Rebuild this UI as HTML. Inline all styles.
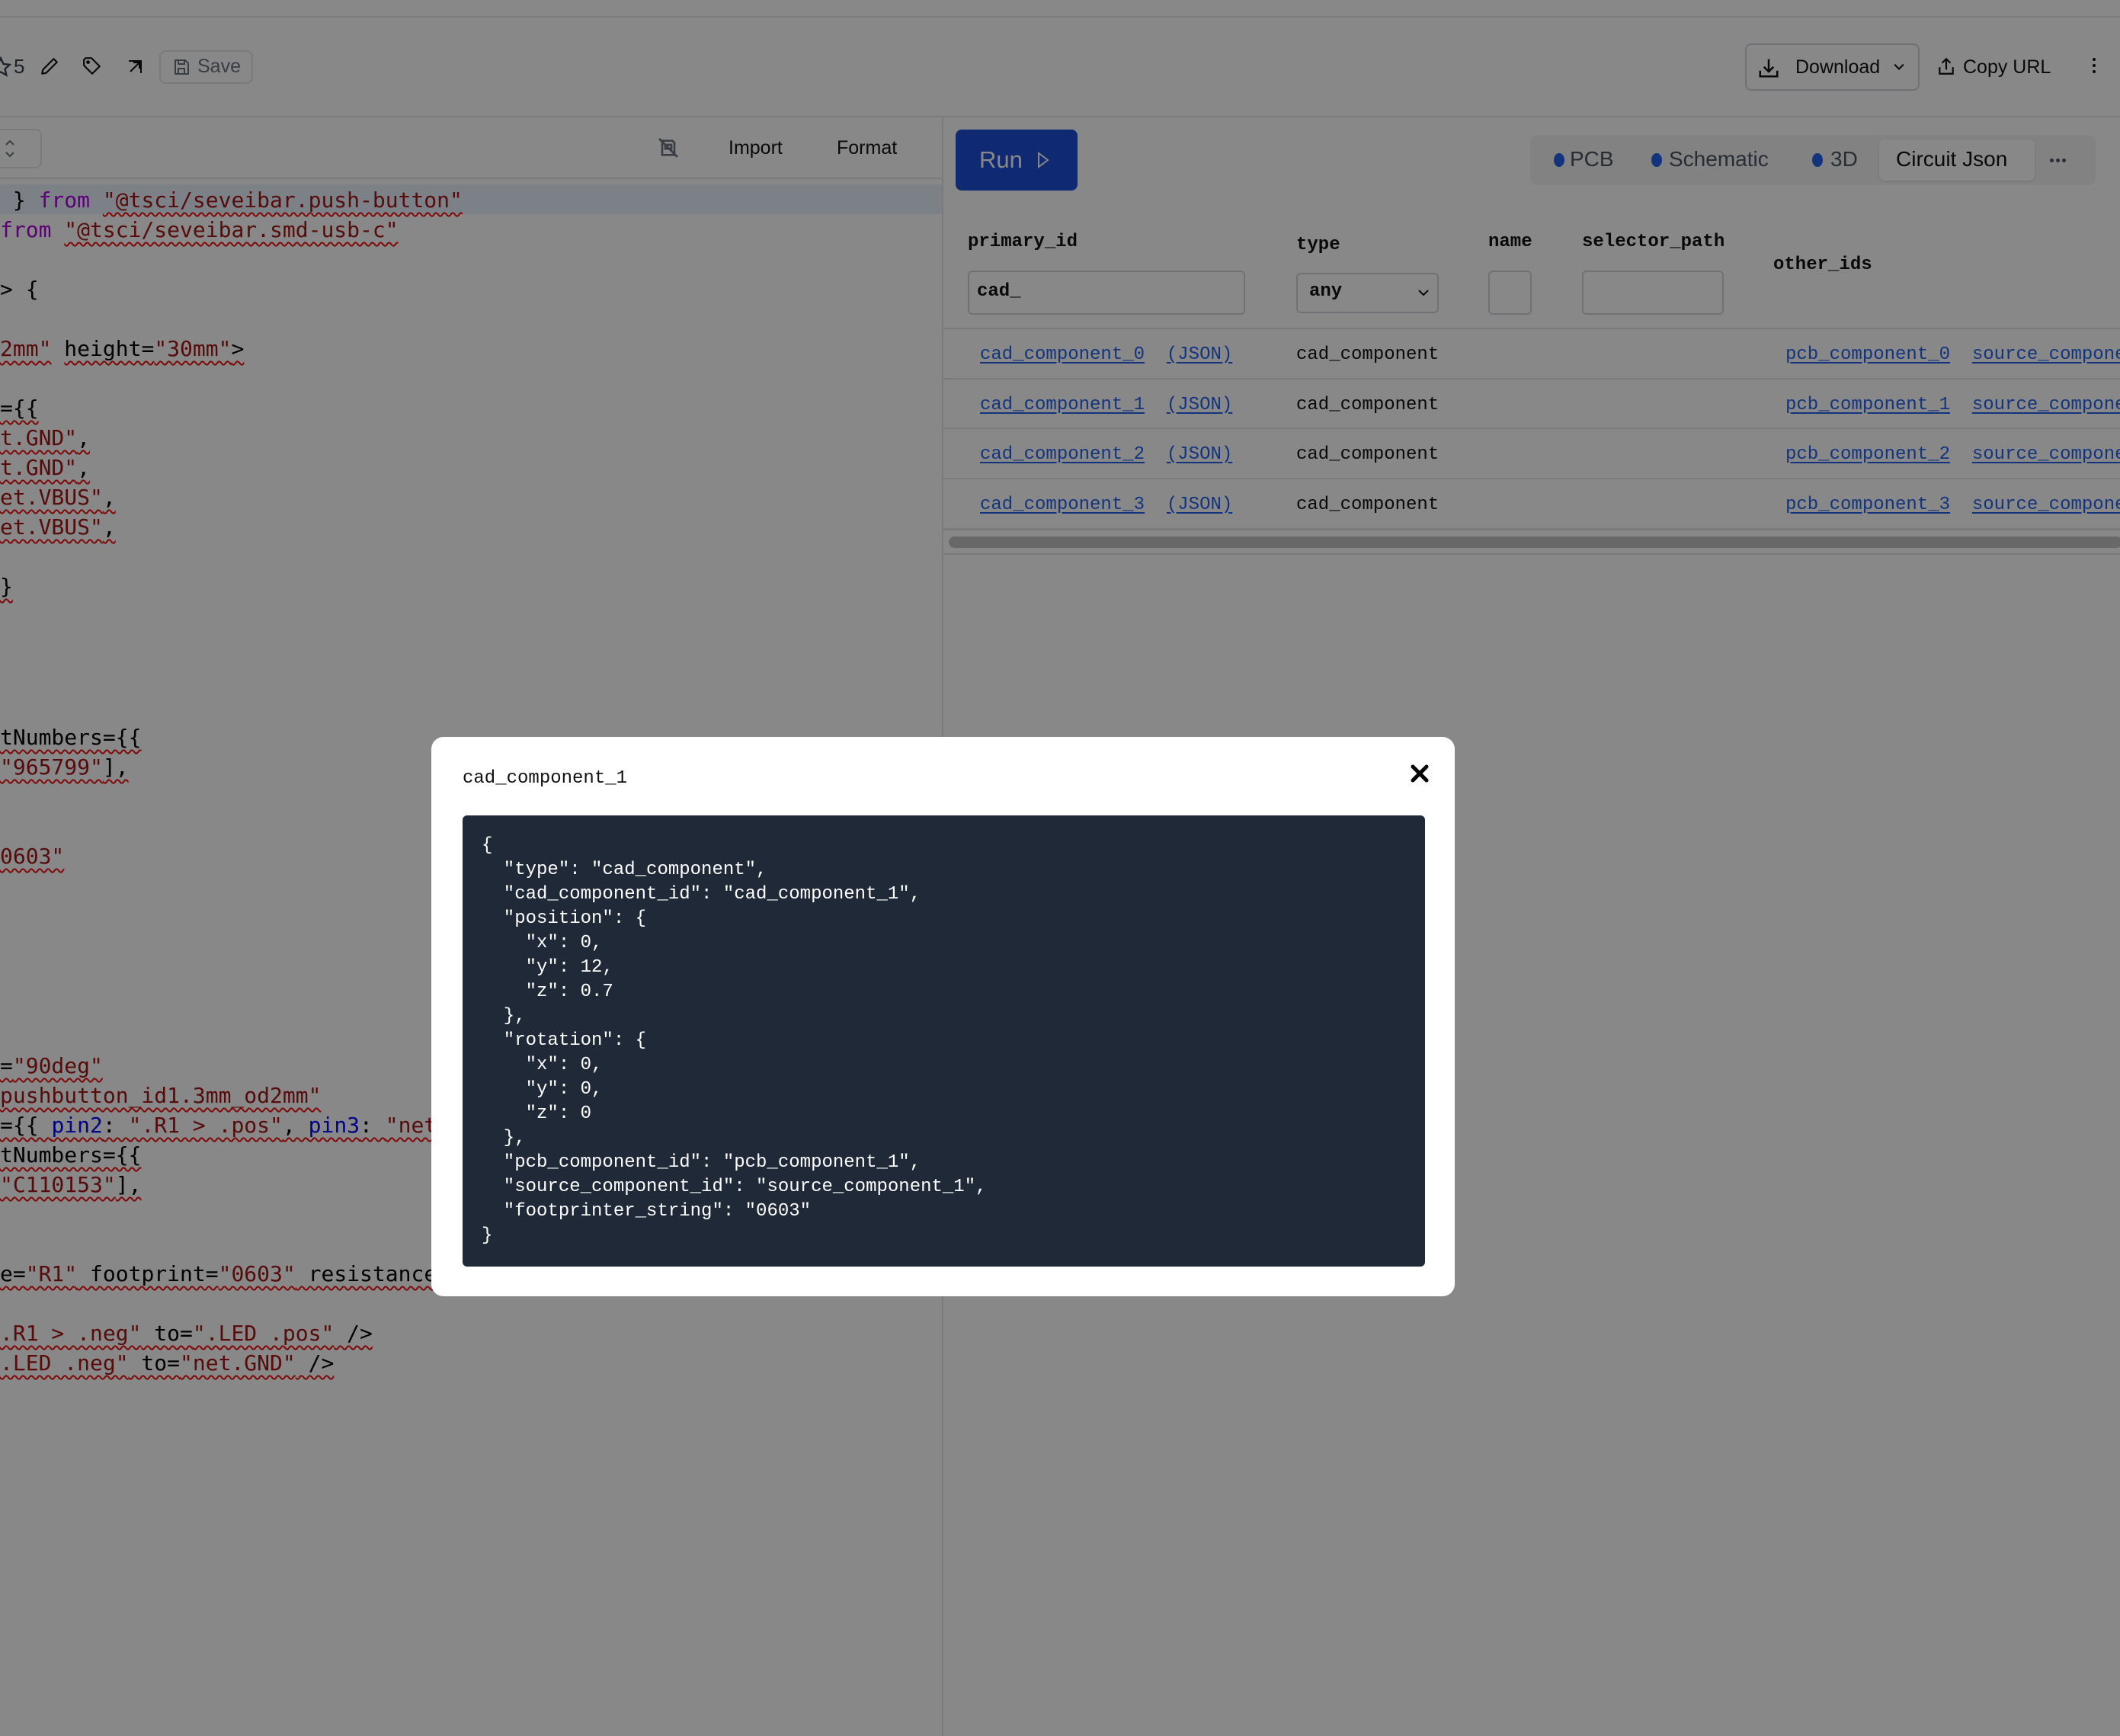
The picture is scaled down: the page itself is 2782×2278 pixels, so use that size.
<!DOCTYPE html>
<html><head><meta charset="utf-8">
<style>
*{box-sizing:border-box;margin:0;padding:0}
html,body{width:2782px;height:2278px;overflow:hidden;background:#fff;font-family:"Liberation Sans",sans-serif;position:relative}
.abs{position:absolute}
.hl{position:absolute;left:0;width:2782px;height:2px;background:#e5e7eb}
.code{position:absolute;left:0;font-family:"DejaVu Sans Mono",monospace;font-size:28px;line-height:39px;white-space:pre;color:#000}
.s{color:#a31515;text-decoration:underline wavy #e11;text-decoration-thickness:2px;text-underline-offset:6px}
.w{text-decoration:underline wavy #e11;text-decoration-thickness:2px;text-underline-offset:6px}
.k{color:#af00db}
.p{color:#0000ff}
.mono{font-family:"Liberation Mono","DejaVu Sans Mono",monospace}
.lnk{color:#2563eb;text-decoration:underline;text-underline-offset:4px}
.tbl{font-size:24px}
.inp{position:absolute;border:2px solid #d1d5db;border-radius:6px;background:#fff}
.row{position:absolute;left:1237px;width:1545px;height:2px;background:#e5e7eb}
.ov{position:absolute;left:0;top:0;width:2782px;height:2278px;background:rgba(0,0,0,0.467)}
</style></head><body>
<div class="hl" style="top:21px"></div>
<!-- header -->
<svg class="abs" style="left:-14px;top:74px" width="30" height="28" viewBox="0 0 24 24" fill="none" stroke="#374151" stroke-width="2"><path d="M12 2l3 6.5 7 .8-5.2 4.8 1.5 7L12 17.5 5.7 21l1.5-7L2 9.3l7-.8z"/></svg>
<div class="abs" style="left:18px;top:72px;font-size:26px;color:#374151">5</div>
<svg class="abs" style="left:52px;top:74px" width="26" height="26" viewBox="0 0 24 24" fill="none" stroke="#111" stroke-width="2" stroke-linejoin="round"><path d="M17 3l4 4L8 20l-5 1 1-5z"/></svg>
<svg class="abs" style="left:108px;top:74px" width="26" height="26" viewBox="0 0 24 24" fill="none" stroke="#111" stroke-width="2" stroke-linejoin="round"><path d="M2 4v7l10 10 9-9L11 2H4z"/><circle cx="7" cy="7" r="1.2"/></svg>
<svg class="abs" style="left:165px;top:76px" width="24" height="24" viewBox="0 0 24 24" fill="none" stroke="#111" stroke-width="2"><path d="M4 4h16v16M6 18L18 6M10 6h8v8"/></svg>
<div class="abs" style="left:209px;top:66px;width:123px;height:44px;border:2px solid #e5e7eb;border-radius:8px"></div>
<svg class="abs" style="left:226px;top:76px" width="24" height="24" viewBox="0 0 24 24" fill="none" stroke="#6b7280" stroke-width="2"><path d="M4 3h13l4 4v14H4z"/><path d="M8 3v5h8V3M8 21v-7h8v7"/></svg>
<div class="abs" style="left:259px;top:73px;font-size:25px;color:#6b7280">Save</div>
<div class="abs" style="left:2290px;top:57px;width:229px;height:62px;border:2px solid #d1d5db;border-radius:8px"></div>
<svg class="abs" style="left:2306px;top:74px" width="30" height="30" viewBox="0 0 24 24" fill="none" stroke="#111" stroke-width="2"><path d="M12 3v13M7 11l5 5 5-5M3 15v6h18v-6"/></svg>
<div class="abs" style="left:2356px;top:74px;font-size:25px;color:#111">Download</div>
<svg class="abs" style="left:2481px;top:78px" width="22" height="20" viewBox="0 0 24 24" fill="none" stroke="#111" stroke-width="2.5"><path d="M5 8l7 7 7-7"/></svg>
<svg class="abs" style="left:2541px;top:72px" width="26" height="30" viewBox="0 0 24 24" fill="none" stroke="#111" stroke-width="2"><path d="M12 16V3M7 8l5-5 5 5M4 13v8h16v-8"/></svg>
<div class="abs" style="left:2576px;top:74px;font-size:25px;color:#111">Copy URL</div>
<div class="abs" style="left:2746px;top:76px;width:4px;height:4px;background:#111;border-radius:2px;box-shadow:0 8px 0 #111,0 16px 0 #111"></div>
<div class="hl" style="top:152px"></div>
<!-- left editor -->
<div class="abs" style="left:1236px;top:153px;width:2px;height:2125px;background:#e5e7eb"></div>
<div class="abs" style="left:-20px;top:169px;width:75px;height:52px;border:2px solid #e5e7eb;border-radius:8px"></div>
<svg class="abs" style="left:5px;top:182px" width="16" height="26" viewBox="0 0 16 26" fill="none" stroke="#6b7280" stroke-width="2"><path d="M3 8l5-5 5 5M3 18l5 5 5-5"/></svg>
<svg class="abs" style="left:861px;top:178px" width="32" height="32" viewBox="0 0 24 24" fill="none" stroke="#6b7280" stroke-width="2"><path d="M6 5h10l2 2v12H6zM9 9h6v4H9zM3 3l18 18"/></svg>
<div class="abs" style="left:956px;top:180px;font-size:25px;color:#111">Import</div>
<div class="abs" style="left:1098px;top:180px;font-size:25px;color:#111">Format</div>
<div class="abs" style="left:0;top:233px;width:1237px;height:2px;background:#e5e7eb"></div>
<div class="abs" style="left:0;top:242px;width:1236px;height:39px;background:#e8f2ff"></div>
<div class="code" style="top:243px"> } <span class="k">from</span> <span class="s">"@tsci/seveibar.push-button"</span></div>
<div class="code" style="top:282px"><span class="k">from</span> <span class="s">"@tsci/seveibar.smd-usb-c"</span></div>
<div class="code" style="top:360px">&gt; {</div>
<div class="code" style="top:438px"><span class="s">2mm"</span> <span class="w">height=</span><span class="s">"30mm"</span><span class="w">&gt;</span></div>
<div class="code" style="top:516px"><span class="w">={{</span></div>
<div class="code" style="top:555px"><span class="s">t.GND"</span><span class="w">,</span></div>
<div class="code" style="top:594px"><span class="s">t.GND"</span><span class="w">,</span></div>
<div class="code" style="top:633px"><span class="s">et.VBUS"</span><span class="w">,</span></div>
<div class="code" style="top:672px"><span class="s">et.VBUS"</span><span class="w">,</span></div>
<div class="code" style="top:750px"><span class="w">}</span></div>
<div class="code" style="top:948px"><span class="w">tNumbers={{</span></div>
<div class="code" style="top:987px"><span class="s">"965799"</span><span class="w">],</span></div>
<div class="code" style="top:1104px"><span class="s">0603"</span></div>
<div class="code" style="top:1379px"><span class="w">=</span><span class="s">"90deg"</span></div>
<div class="code" style="top:1418px"><span class="s">pushbutton_id1.3mm_od2mm"</span></div>
<div class="code" style="top:1457px"><span class="w">={{ </span><span class="p w">pin2</span><span class="w">: </span><span class="s">".R1 &gt; .pos"</span><span class="w">, </span><span class="p w">pin3</span><span class="w">: </span><span class="s">"net.VBUS"</span></div>
<div class="code" style="top:1496px"><span class="w">tNumbers={{</span></div>
<div class="code" style="top:1535px"><span class="s">"C110153"</span><span class="w">],</span></div>
<div class="code" style="top:1652px"><span class="w">e=</span><span class="s">"R1"</span><span class="w"> footprint=</span><span class="s">"0603"</span><span class="w"> resistance</span></div>
<div class="code" style="top:1730px"><span class="s">.R1 &gt; .neg"</span><span class="w"> to=</span><span class="s">".LED .pos"</span><span class="w"> /&gt;</span></div>
<div class="code" style="top:1769px"><span class="s">.LED .neg"</span><span class="w"> to=</span><span class="s">"net.GND"</span><span class="w"> /&gt;</span></div>
<!-- right panel -->
<div class="abs" style="left:1254px;top:170px;width:160px;height:80px;background:#1d4ed8;border-radius:8px"></div>
<div class="abs" style="left:1285px;top:192px;font-size:31px;color:#fff">Run</div>
<svg class="abs" style="left:1360px;top:198px" width="18" height="24" viewBox="0 0 18 24" fill="none" stroke="#fff" stroke-width="2"><path d="M3 3l12 9-12 9z"/></svg>
<div class="abs" style="left:2008px;top:177px;width:742px;height:66px;background:#f3f4f6;border-radius:10px"></div>
<div class="abs" style="left:2466px;top:183px;width:204px;height:54px;background:#fff;border-radius:8px;box-shadow:0 1px 3px rgba(0,0,0,.12)"></div>
<div class="abs" style="left:2039px;top:201px;width:14px;height:18px;border-radius:50%;background:#2563eb"></div>
<div class="abs" style="left:2060px;top:193px;font-size:28px;color:#4b5563">PCB</div>
<div class="abs" style="left:2167px;top:201px;width:14px;height:18px;border-radius:50%;background:#2563eb"></div>
<div class="abs" style="left:2190px;top:193px;font-size:28px;color:#4b5563">Schematic</div>
<div class="abs" style="left:2378px;top:201px;width:14px;height:18px;border-radius:50%;background:#2563eb"></div>
<div class="abs" style="left:2402px;top:193px;font-size:28px;color:#4b5563">3D</div>
<div class="abs" style="left:2488px;top:193px;font-size:28px;color:#111">Circuit Json</div>
<div class="abs" style="left:2690px;top:208px;width:5px;height:5px;background:#4b5563;border-radius:50%;box-shadow:8px 0 0 #4b5563,16px 0 0 #4b5563"></div>
<div class="abs mono tbl" style="left:1270px;top:304px;font-weight:bold;color:#111">primary_id</div>
<div class="abs mono tbl" style="left:1701px;top:308px;font-weight:bold;color:#111">type</div>
<div class="abs mono tbl" style="left:1953px;top:304px;font-weight:bold;color:#111">name</div>
<div class="abs mono tbl" style="left:2076px;top:304px;font-weight:bold;color:#111">selector_path</div>
<div class="abs mono tbl" style="left:2327px;top:334px;font-weight:bold;color:#111">other_ids</div>
<div class="inp" style="left:1270px;top:355px;width:364px;height:58px"></div>
<div class="abs mono tbl" style="left:1282px;top:369px;font-weight:bold;color:#111">cad_</div>
<div class="inp" style="left:1701px;top:358px;width:187px;height:53px"></div>
<div class="abs mono tbl" style="left:1718px;top:369px;font-weight:bold;color:#111">any</div>
<svg class="abs" style="left:1860px;top:377px" width="16" height="14" viewBox="0 0 16 14" fill="none" stroke="#111" stroke-width="2"><path d="M2 4l6 6 6-6"/></svg>
<div class="inp" style="left:1953px;top:355px;width:57px;height:58px"></div>
<div class="inp" style="left:2076px;top:355px;width:186px;height:58px"></div>
<div class="row" style="top:430px"></div>
<div class="row" style="top:496px"></div>
<div class="row" style="top:561px"></div>
<div class="row" style="top:627px"></div>
<div class="row" style="top:693px;height:3px"></div>
<div class="abs mono tbl" style="left:1286px;top:433px;line-height:65.7px;white-space:pre"><span class="lnk">cad_component_0</span>  <span class="lnk">(JSON)</span><br><span class="lnk">cad_component_1</span>  <span class="lnk">(JSON)</span><br><span class="lnk">cad_component_2</span>  <span class="lnk">(JSON)</span><br><span class="lnk">cad_component_3</span>  <span class="lnk">(JSON)</span></div>
<div class="abs mono tbl" style="left:1701px;top:433px;line-height:65.7px;color:#111">cad_component<br>cad_component<br>cad_component<br>cad_component</div>
<div class="abs mono tbl" style="left:2343px;top:433px;line-height:65.7px;white-space:pre"><span class="lnk">pcb_component_0</span>  <span class="lnk">source_component_0</span><br><span class="lnk">pcb_component_1</span>  <span class="lnk">source_component_1</span><br><span class="lnk">pcb_component_2</span>  <span class="lnk">source_component_2</span><br><span class="lnk">pcb_component_3</span>  <span class="lnk">source_component_3</span></div>
<div class="abs" style="left:1245px;top:704px;width:1540px;height:15px;background:#c4c4c4;border-radius:8px"></div>
<div class="row" style="top:726px"></div>
<!-- overlay -->
<div class="ov"></div>
<div class="abs" style="left:566px;top:967px;width:1343px;height:734px;background:#fff;border-radius:16px"></div>
<div class="abs mono" style="left:607px;top:1008px;font-size:24px;color:#111">cad_component_1</div>
<svg class="abs" style="left:1850px;top:1002px" width="26" height="26" viewBox="0 0 26 26" stroke="#000" stroke-width="5" stroke-linecap="round"><path d="M4 4l18 18M22 4L4 22"/></svg>
<div class="abs" style="left:607px;top:1070px;width:1263px;height:592px;background:#1f2937;border-radius:6px"></div>
<pre class="abs mono" style="left:632px;top:1094px;font-size:24px;line-height:32px;color:#fff">{
  "type": "cad_component",
  "cad_component_id": "cad_component_1",
  "position": {
    "x": 0,
    "y": 12,
    "z": 0.7
  },
  "rotation": {
    "x": 0,
    "y": 0,
    "z": 0
  },
  "pcb_component_id": "pcb_component_1",
  "source_component_id": "source_component_1",
  "footprinter_string": "0603"
}</pre>
</body></html>
